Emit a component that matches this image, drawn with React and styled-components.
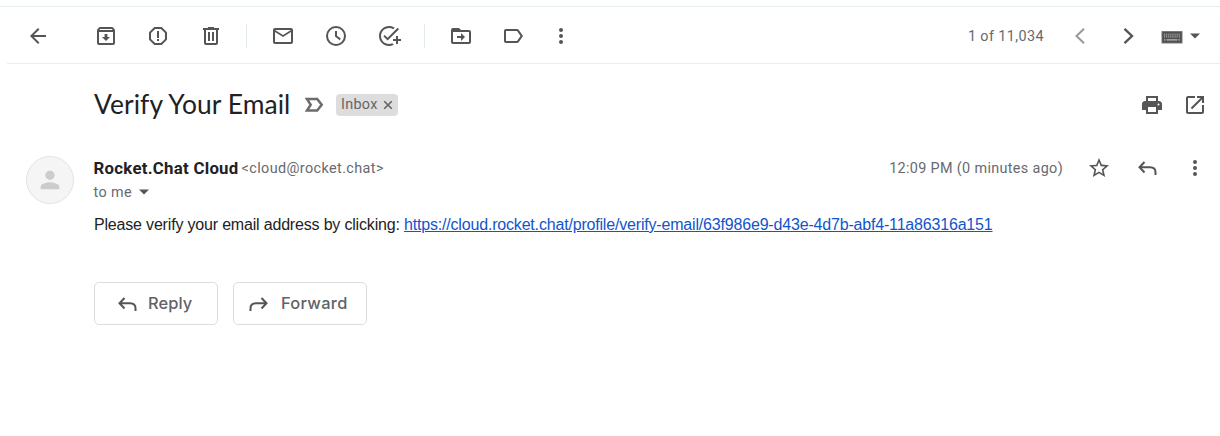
import React from "react";
import styled, { createGlobalStyle } from "styled-components";

const GlobalStyle = createGlobalStyle`
  * { box-sizing: border-box; }
  body { margin: 0; background: #fff; font-family: Roboto, "Liberation Sans", sans-serif; color: #202124; }
`;

const Page = styled.main`
  height: 436px;
  padding-top: 6px;
  overflow: hidden;
`;

const TopLine = styled.div`
  height: 1px;
  background: #e7efee;
`;

const Toolbar = styled.nav`
  display: flex;
  align-items: center;
  justify-content: space-between;
  height: 57px;
  margin-left: 7px;
  padding: 2px 18px 0 19px;
  border-bottom: 1px solid #e7efee;
`;

const Group = styled.div`
  display: flex;
  align-items: center;
`;

const IconButton = styled.button`
  display: flex;
  flex: none;
  width: 24px;
  height: 24px;
  margin: 0 0 0 ${(p) => p.$gap || 0}px;
  padding: 0;
  border: 0;
  background: none;
  color: ${(p) => p.$color || "#555"};
`;

const Divider = styled.span`
  width: 1px;
  height: 24px;
  margin-left: ${(p) => p.$gap}px;
  background: #e3ebea;
`;

const Counter = styled.span`
  padding-top: 1px;
  font-size: 14.4px;
  line-height: 20px;
  letter-spacing: ${(p) => p.$spacing || 0.38}px;
  white-space: nowrap;
  color: #666a6f;
`;

const SubjectRow = styled.header`
  display: flex;
  align-items: center;
  height: 82px;
  padding: 0 13px 0 94px;
`;

const Subject = styled.h1`
  margin: 0;
  width: 208px;
  padding-bottom: 2px;
  font: 400 26.4px/32px Lato, sans-serif;
  letter-spacing: 0.08px;
  white-space: nowrap;
  color: #202124;
`;

const Label = styled.span`
  display: flex;
  align-items: center;
  justify-content: space-between;
  width: 62px;
  height: 22px;
  margin-left: 10px;
  padding: 0 3px 1px 5px;
  border-radius: 4px;
  background: #ddd;
  color: #666;
  font-size: 14.4px;
  letter-spacing: 0.3px;
`;

const Actions = styled.div`
  display: flex;
  align-items: center;
  margin-left: auto;
`;

const Message = styled.article`
  display: grid;
  grid-template-columns: 48px 1fr;
  column-gap: 19.6px;
  padding: 10px 13px 0 26px;
`;

const Avatar = styled.div`
  display: grid;
  place-items: center;
  width: 48px;
  height: 48px;
  border: 1px solid #e4e4e4;
  border-radius: 50%;
  background: #f5f5f5;
  color: #ccc;
`;

const Meta = styled.div`
  display: flex;
  align-items: center;
  height: 24px;
`;

const Sender = styled.strong`
  width: 148px;
  font-size: 16.8px;
  font-weight: 700;
  letter-spacing: 0.27px;
  white-space: nowrap;
`;

const Address = styled.span`
  font-size: 14.4px;
  letter-spacing: 0.39px;
  color: #666a6f;
`;

const Recipient = styled.div`
  display: flex;
  align-items: center;
  gap: 7px;
  height: 24px;
  font-size: 14.4px;
  letter-spacing: 0.38px;
  color: #666a6f;
`;

const Body = styled.p`
  margin: 9px 0 0 0.4px;
  font: 16px/24px "Liberation Sans", Arial, sans-serif;
  letter-spacing: -0.182px;
  color: #222;
  white-space: nowrap;
`;

const Link = styled.a`
  color: #15c;
  text-decoration: underline;
`;

const ReplyBar = styled.div`
  display: flex;
  gap: 15px;
  margin: 45px 0 0 0.4px;
`;

const ReplyButton = styled.button`
  display: flex;
  align-items: center;
  width: ${(p) => p.$width}px;
  height: 43px;
  padding: 0 0 0 ${(p) => p.$inset}px;
  gap: ${(p) => p.$gap}px;
  border: 1px solid #dadce0;
  border-radius: 5px;
  background: #fff;
  color: #5f6368;
  font: 500 16.4px/24px Inter, sans-serif;
  letter-spacing: ${(p) => p.$spacing}px;
  svg { color: #555; }
`;

const ReplyText = styled.span`
  padding-bottom: 2px;
`;

const paths = {
  back: "M20 11H7.83l5.59-5.59L12 4l-8 8 8 8 1.41-1.41L7.83 13H20v-2z",
  archive: "M20.54 5.23l-1.39-1.68C18.88 3.21 18.47 3 18 3H6c-.47 0-.88.21-1.16.55L3.46 5.23C3.17 5.57 3 6.02 3 6.5V19c0 1.1.9 2 2 2h14c1.1 0 2-.9 2-2V6.5c0-.48-.17-.93-.46-1.27zM6.24 5h11.52l.83 1H5.42l.82-1zM5 19V8h14v11H5zM13.4 10h-2.8v3H8l4 4 4-4h-2.6v-3z",
  report: "M15.73 3H8.27L3 8.27v7.46L8.27 21h7.46L21 15.73V8.27L15.73 3zM19 14.9L14.9 19H9.1L5 14.9V9.1L9.1 5h5.8L19 9.1v5.8zM11 7h2v7h-2zM11 15h2v2h-2z",
  trash: "M15 4V3H9v1H4v2h1v13c0 1.1.9 2 2 2h10c1.1 0 2-.9 2-2V6h1V4h-5zm2 15H7V6h10v13zM9 8h2v9H9zM13 8h2v9h-2z",
  mail: "M22 6c0-1.1-.9-2-2-2H4c-1.1 0-2 .9-2 2v12c0 1.1.9 2 2 2h16c1.1 0 2-.9 2-2V6zm-2 0l-8 5-8-5h16zm0 12H4V8l8 5 8-5v10z",
  clock: "M12 2a10 10 0 1 0 0 20 10 10 0 0 0 0-20zm0 18a8 8 0 1 1 0-16 8 8 0 0 1 0 16zM13 7h-2v5.6l4.7 3.6 1.1-1.6-3.8-2.9V7z",
  task: "M22 5.18L10.59 16.6l-4.24-4.24 1.41-1.41 2.83 2.83 10-10L22 5.18zM12 20c-4.41 0-8-3.59-8-8s3.59-8 8-8c1.57 0 3.04.46 4.28 1.25l1.45-1.45C16.1 2.67 14.13 2 12 2 6.48 2 2 6.48 2 12s4.48 10 10 10c1.73 0 3.36-.44 4.78-1.22l-1.5-1.5c-1 .46-2.11.72-3.28.72zM19 15h-3v2h3v3h2v-3h3v-2h-3v-3h-2v3z",
  move: "M20 6h-8l-2-2H4c-1.1 0-2 .9-2 2v12c0 1.1.9 2 2 2h16c1.1 0 2-.9 2-2V8c0-1.1-.9-2-2-2zm0 12H4V8h16v10zM12 17l4-4-4-4v3H8v2h4v3z",
  label: "M17.63 5.84C17.27 5.33 16.67 5 16 5L5 5.01C3.9 5.01 3 5.9 3 7v10c0 1.1.9 1.99 2 1.99L16 19c.67 0 1.27-.33 1.63-.84L22 12l-4.37-6.16zM16 17H5V7h11l3.55 5L16 17z",
  more: "M12 8a2 2 0 1 0 0-4 2 2 0 0 0 0 4zM12 10a2 2 0 1 0 0 4 2 2 0 0 0 0-4zM12 16a2 2 0 1 0 0 4 2 2 0 0 0 0-4z",
  print: "M18 3H6v5H5c-1.66 0-3 1.34-3 3v6h4v4h12v-4h4v-6c0-1.66-1.34-3-3-3h-1V3zM8 5h8v3H8V5zm8 14H8v-5h8v5zm2.5-6.5a1 1 0 1 1 0-2 1 1 0 0 1 0 2z",
  open: "M19 19H5V5h7V3H5c-1.1 0-2 .9-2 2v14c0 1.1.9 2 2 2h14c1.1 0 2-.9 2-2v-7h-2v7zM14 3v2h3.59l-9.83 9.83 1.41 1.41L19 6.41V10h2V3h-7z",
  star: "M22 9.24l-7.19-.62L12 2 9.19 8.63 2 9.24l5.46 4.73L5.82 21 12 17.27 18.18 21l-1.63-7.03L22 9.24zM12 15.4l-3.76 2.27 1-4.28-3.32-2.88 4.38-.38L12 6.1l1.71 4.04 4.38.38-3.32 2.88 1 4.28L12 15.4z",
  person: "M12 12c2.2 0 4-1.8 4-4s-1.8-4-4-4-4 1.8-4 4 1.8 4 4 4zM12 14c-2.7 0-8 1.3-8 4v2h16v-2c0-2.7-5.3-4-8-4z",
};

const strokes = {
  prev: "M16 4.8L8.5 12l7.5 7.2",
  next: "M8.5 4.8L16 12l-7.500 7.2",
  reply: "M9.500 6L4.500 11.300l5 5.200M4.800 11.300H15c3.500 0 5.500 1.800 5.500 5V19",
  forward: "M14.500 6l5 5.300-5 5.200M19.200 11.300H9c-3.500 0-5.500 1.800-5.500 5V19",
  important: "M5 6.100h10.200l4.500 5.700-4.500 5.700H5l3.700-5.700z",
  close: "M5.500 5.500l13 13M18.500 5.500l-13 13",
};

function Icon({ name, size = 24, weight = 2 }) {
  return (
    <svg width={size} height={size} viewBox="0 0 24 24" aria-hidden="true">
      {paths[name] ? (
        <path d={paths[name]} fill="currentColor" fillRule="evenodd" />
      ) : (
        <path d={strokes[name]} fill="none" stroke="currentColor" strokeWidth={weight} />
      )}
    </svg>
  );
}

function Keyboard() {
  return (
    <svg width="22" height="24" viewBox="0 0 22 24" aria-hidden="true">
      <rect x="0.500" y="7" width="21" height="12.500" rx="0.500" fill="#777" />
      <rect x="1.500" y="8" width="19" height="10.500" fill="#4f4f4f" />
      <path d="M3 11.600h16.200" stroke="#999" strokeWidth="4.400" strokeDasharray="1.100 1" />
      <path d="M3 11.600h16" stroke="#666" strokeWidth=".6" />
      <path d="M3 15.800h1.500M5.500 15.800h11M17.500 15.800H19" stroke="#bbb" strokeWidth="1.300" />
    </svg>
  );
}

function Caret() {
  return (
    <svg width="10" height="6" viewBox="0 0 10 6" aria-hidden="true">
      <path d="M0 .5h10L5 5.500z" fill="#555" />
    </svg>
  );
}

const CaretSlot = styled.span`
  display: flex;
  margin: 0 2px 1px 7px;
`;

const KeyboardSlot = styled.span`
  display: flex;
  margin-left: 21px;
`;

export default function App() {
  return (
    <Page>
      <GlobalStyle />
      <TopLine />
      <Toolbar>
        <Group>
          <IconButton aria-label="Back"><Icon name="back" /></IconButton>
          <IconButton $gap={44} aria-label="Archive"><Icon name="archive" /></IconButton>
          <IconButton $gap={28} aria-label="Report spam"><Icon name="report" /></IconButton>
          <IconButton $gap={29} aria-label="Delete"><Icon name="trash" /></IconButton>
          <Divider $gap={23} />
          <IconButton $gap={24} aria-label="Mark as unread"><Icon name="mail" /></IconButton>
          <IconButton $gap={29} aria-label="Snooze"><Icon name="clock" /></IconButton>
          <IconButton $gap={29} aria-label="Add to tasks"><Icon name="task" /></IconButton>
          <Divider $gap={23} />
          <IconButton $gap={24} aria-label="Move to"><Icon name="move" /></IconButton>
          <IconButton $gap={28} aria-label="Labels"><Icon name="label" /></IconButton>
          <IconButton $gap={24} aria-label="More"><Icon name="more" /></IconButton>
        </Group>
        <Group>
          <Counter $spacing={0.4}>1 of 11,034</Counter>
          <IconButton $gap={24} $color="#999" aria-label="Newer"><Icon name="prev" /></IconButton>
          <IconButton $gap={24} aria-label="Older"><Icon name="next" weight={2.4} /></IconButton>
          <KeyboardSlot><Keyboard /></KeyboardSlot>
          <CaretSlot><Caret /></CaretSlot>
        </Group>
      </Toolbar>
      <SubjectRow>
        <Subject>Verify Your Email</Subject>
        <IconButton $color="#6c6c6c" aria-label="Important"><Icon name="important" weight={2.5} /></IconButton>
        <Label>Inbox<Icon name="close" size={14} weight={2.8} /></Label>
        <Actions>
          <IconButton aria-label="Print"><Icon name="print" /></IconButton>
          <IconButton $gap={19} aria-label="Open in new window"><Icon name="open" /></IconButton>
        </Actions>
      </SubjectRow>
      <Message>
        <Avatar><Icon name="person" size={28} /></Avatar>
        <div>
          <Meta>
            <Sender>Rocket.Chat Cloud</Sender>
            <Address>&lt;cloud@rocket.chat&gt;</Address>
            <Actions>
              <Counter $spacing={0.34}>12:09 PM (0 minutes ago)</Counter>
              <IconButton $gap={24} aria-label="Star"><Icon name="star" /></IconButton>
              <IconButton $gap={24} aria-label="Reply"><Icon name="reply" /></IconButton>
              <IconButton $gap={24} aria-label="More"><Icon name="more" /></IconButton>
            </Actions>
          </Meta>
          <Recipient>to me<Caret /></Recipient>
          <Body>
            Please verify your email address by clicking:{" "}
            <Link>https://cloud.rocket.chat/profile/verify-email/63f986e9-d43e-4d7b-abf4-11a86316a151</Link>
          </Body>
          <ReplyBar>
            <ReplyButton $width={124} $inset={20} $gap={9} $spacing={0.1}><Icon name="reply" /><ReplyText>Reply</ReplyText></ReplyButton>
            <ReplyButton $width={134} $inset={13} $gap={10} $spacing={0.3}><Icon name="forward" /><ReplyText>Forward</ReplyText></ReplyButton>
          </ReplyBar>
        </div>
      </Message>
    </Page>
  );
}
